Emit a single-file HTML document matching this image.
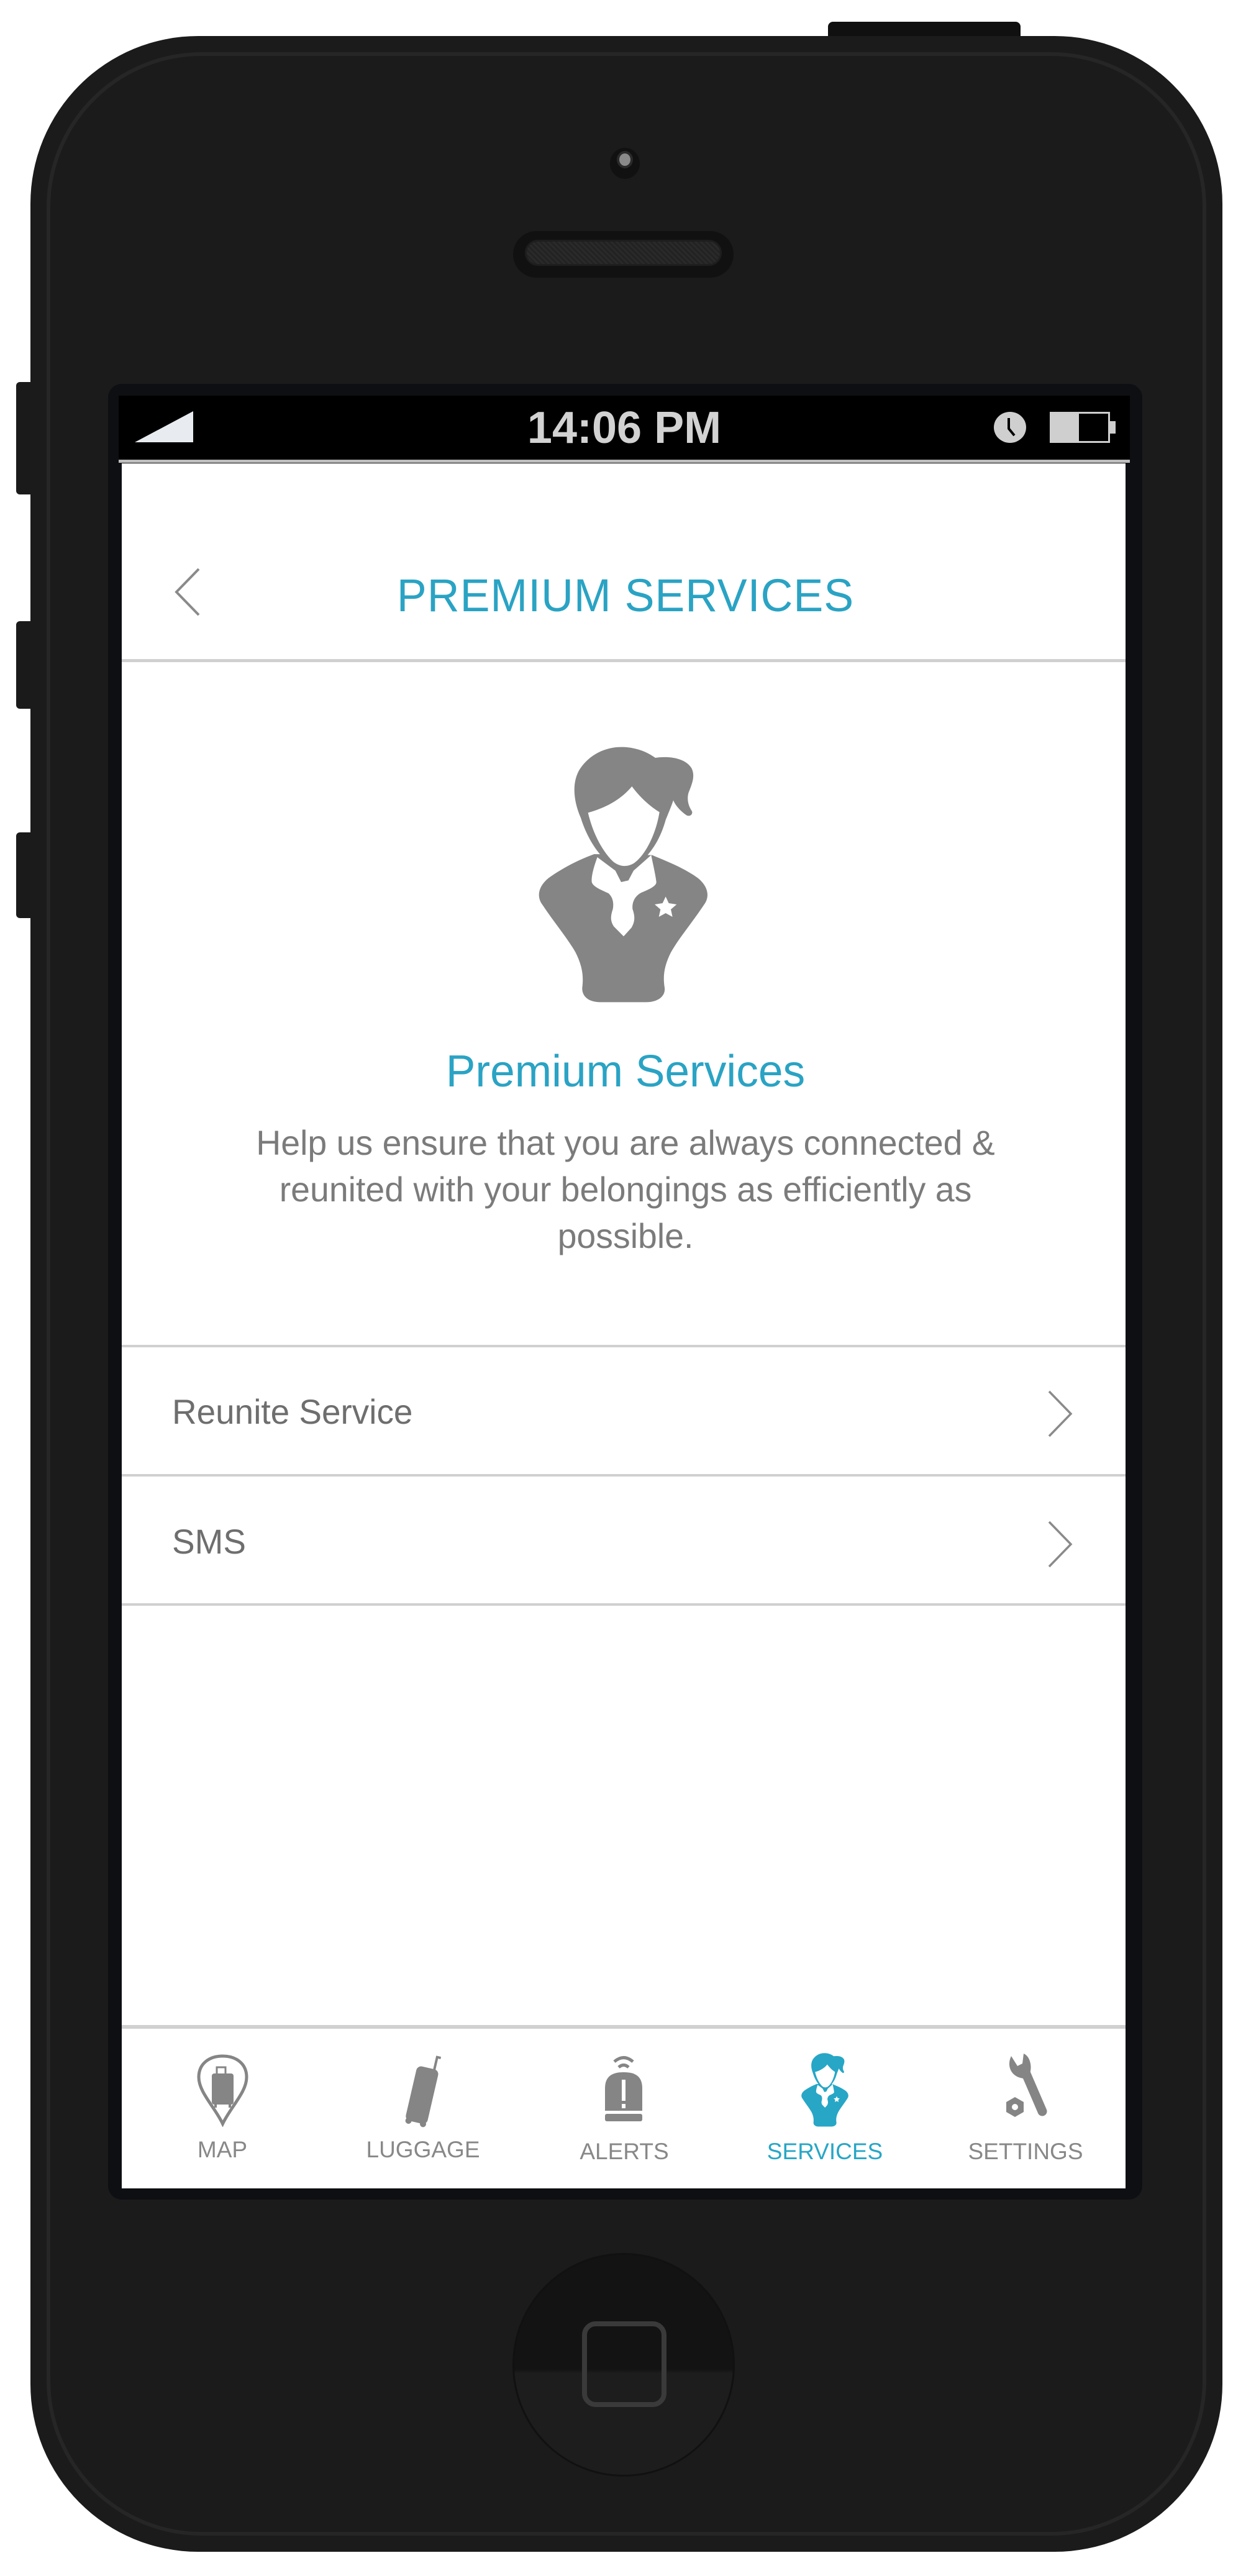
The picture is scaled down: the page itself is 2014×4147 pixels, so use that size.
<!DOCTYPE html>
<html><head><meta charset="utf-8">
<style>
*{margin:0;padding:0;box-sizing:border-box}
html,body{width:2014px;height:4147px;background:#fff;overflow:hidden;position:relative;font-family:"Liberation Sans",sans-serif}
.a{position:absolute}
.txt{white-space:nowrap;transform-origin:center}
</style></head><body>
<div class="a" style="left:26px;top:615px;width:30px;height:181px;background:#1a1a1a;border-radius:6px 0 0 6px"></div>
<div class="a" style="left:26px;top:1000px;width:30px;height:141px;background:#1a1a1a;border-radius:6px 0 0 6px"></div>
<div class="a" style="left:26px;top:1340px;width:30px;height:138px;background:#1a1a1a;border-radius:6px 0 0 6px"></div>
<div class="a" style="left:1333px;top:35px;width:310px;height:40px;background:#101010;border-radius:8px 8px 0 0"></div>
<div class="a" style="left:49px;top:58px;width:1919px;height:4050px;background:#1b1b1b;border-radius:270px"></div>
<div class="a" style="left:75px;top:84px;width:1867px;height:3998px;border:6px solid #262626;border-radius:250px"></div>
<div class="a" style="left:982px;top:238px;width:48px;height:50px;border-radius:50%;background:#111"></div>
<div class="a" style="left:993px;top:243px;width:26px;height:28px;border-radius:50%;background:#8a8a8a;border:4px solid #2a2a2a"></div>
<div class="a" style="left:826px;top:372px;width:355px;height:75px;border-radius:38px;background:#111"></div>
<div class="a" style="left:845px;top:386px;width:317px;height:42px;border-radius:21px;background:repeating-linear-gradient(45deg,#2a2a2a 0 3px,#222 3px 6px);border:3px solid #1e1e1e"></div>
<div class="a" style="left:174px;top:618px;width:1665px;height:2923px;background:#0e0f13;border-radius:22px"></div>
<div class="a" style="left:191px;top:637px;width:1628px;height:105px;background:#000"></div>
<div class="a" style="left:191px;top:740px;width:1628px;height:5px;background:#bdbdbd"></div>
<div class="a" style="left:196px;top:746px;width:1616px;height:2777px;background:#fff"></div>
<svg class="a" style="left:217px;top:662px" width="94" height="50" viewBox="0 0 94 50"><polygon points="0,50 94,0 94,50" fill="#e8ecf0"/></svg>
<div class="a txt" style="left:755px;top:648px;width:500px;text-align:center;font-size:72px;font-weight:bold;color:#d2d2d2;transform:scaleX(1.0)">14:06 PM</div>
<svg class="a" style="left:1600px;top:663px" width="52" height="50" viewBox="0 0 52 50"><ellipse cx="26" cy="25" rx="26" ry="25" fill="#cfcfcf"/><path d="M24,10 L24,27 L33,38" stroke="#000" stroke-width="4" fill="none"/></svg>
<svg class="a" style="left:1690px;top:663px" width="108" height="50" viewBox="0 0 108 50"><rect x="1.5" y="1.5" width="94" height="47" fill="#000" stroke="#cfcfcf" stroke-width="3"/><rect x="3" y="3" width="44" height="44" fill="#cfcfcf"/><rect x="96" y="15" width="10" height="20" fill="#cfcfcf"/></svg>
<svg class="a" style="left:280px;top:914px" width="44" height="78" viewBox="0 0 44 78"><path d="M40,2 L4,39 L40,76" stroke="#8a8a8a" stroke-width="4" fill="none"/></svg>
<div class="a txt" style="left:407px;top:916px;width:1200px;text-align:center;font-size:74px;color:#2aa3c4;transform:scaleX(0.97);letter-spacing:1px">PREMIUM SERVICES</div>
<div class="a" style="left:196px;top:1061px;width:1616px;height:5px;background:#d0d0d0"></div>
<svg class="a" style="left:800px;top:1180px" width="400" height="460" viewBox="0 0 1200 1380">
<path d="M470,585 C400,610 320,650 250,700 C200,740 190,790 220,830 C280,920 340,990 380,1060 C410,1120 420,1170 412,1230 C410,1270 440,1300 500,1300 L720,1300 C780,1300 815,1270 810,1230 C800,1170 810,1120 840,1060 C880,990 940,920 1000,830 C1030,790 1020,740 970,700 C900,650 820,620 750,590 Z" fill="#858585"/>
<path d="M485,600 C470,640 455,690 458,720 C465,745 510,760 540,775 C560,795 565,820 560,850 C550,880 545,905 565,935 L612,982 L650,940 C670,905 665,880 655,850 C652,815 668,785 700,770 C735,755 770,740 770,720 C765,680 755,640 745,590 L660,665 L635,712 L600,720 L572,665 Z" fill="#fff"/>
<path d="M405,410 C370,330 360,240 400,175 C450,100 530,65 610,68 C680,70 730,95 765,120 C830,110 910,120 940,170 C960,210 940,250 925,290 C915,330 930,360 942,378 C948,395 928,408 912,395 C885,375 862,350 852,325 C840,360 825,395 815,420 C790,510 750,570 700,620 L650,655 L575,655 L520,610 C470,560 430,490 405,410 Z" fill="#858585"/>
<path d="M440,385 C530,360 600,320 652,258 C690,310 740,355 785,382 C770,480 720,590 660,630 C625,650 590,645 560,620 C500,560 460,470 440,385 Z" fill="#fff"/>
<polygon points="815,790 830,822 868,828 840,852 848,888 815,870 782,888 790,852 762,828 800,822" fill="#fff"/>
</svg>
<div class="a txt" style="left:407px;top:1684px;width:1200px;text-align:center;font-size:72px;color:#2aa3c4;transform:scaleX(0.99)">Premium Services</div>
<div class="a" style="left:207px;top:1802px;width:1600px;text-align:center;font-size:56px;line-height:75px;color:#7b7b7b;transform:scaleX(0.99);transform-origin:center">Help us ensure that you are always connected &amp;<br>reunited with your belongings as efficiently as<br>possible.</div>
<div class="a" style="left:196px;top:2165px;width:1616px;height:4px;background:#d0d0d0"></div>
<div class="a" style="left:196px;top:2373px;width:1616px;height:4px;background:#d0d0d0"></div>
<div class="a" style="left:196px;top:2581px;width:1616px;height:4px;background:#d0d0d0"></div>
<div class="a txt" style="left:277px;top:2240px;font-size:56px;color:#6e6e6e;transform:scaleX(0.98);transform-origin:left">Reunite Service</div>
<div class="a txt" style="left:277px;top:2449px;font-size:56px;color:#6e6e6e;transform:scaleX(0.98);transform-origin:left">SMS</div>
<svg class="a" style="left:1686px;top:2238px" width="42" height="76" viewBox="0 0 42 76"><path d="M3,2 L38,38 L3,74" stroke="#8a8a8a" stroke-width="3.5" fill="none"/></svg>
<svg class="a" style="left:1686px;top:2448px" width="42" height="76" viewBox="0 0 42 76"><path d="M3,2 L38,38 L3,74" stroke="#8a8a8a" stroke-width="3.5" fill="none"/></svg>
<div class="a" style="left:196px;top:3260px;width:1616px;height:6px;background:#d0d0d0"></div>
<svg class="a" style="left:315px;top:3306px" width="87" height="118" viewBox="0 0 87 118"><path d="M43.5,113 C30,85 5,62 5,38 C5,16 22,4 43.5,4 C65,4 82,16 82,38 C82,62 57,85 43.5,113Z" stroke="#858585" stroke-width="5" fill="none"/><rect x="34" y="22" width="14" height="12" stroke="#858585" stroke-width="3" fill="none"/><rect x="26" y="32" width="35" height="50" rx="4" fill="#858585"/><rect x="30" y="82" width="4" height="5" fill="#858585"/><rect x="53" y="82" width="4" height="5" fill="#858585"/></svg>
<svg class="a" style="left:643px;top:3306px" width="76" height="120" viewBox="0 0 76 120"><g transform="rotate(13 38 60)"><rect x="20" y="22" width="36" height="90" rx="8" fill="#858585"/><path d="M48,24 L48,2 L54,2" stroke="#858585" stroke-width="4" fill="none"/><circle cx="26" cy="112" r="5" fill="#858585"/><circle cx="50" cy="112" r="5" fill="#858585"/></g></svg>
<svg class="a" style="left:971px;top:3304px" width="66" height="113" viewBox="0 0 66 113"><path d="M18,15 Q33,2 48,15" stroke="#858585" stroke-width="5" fill="none"/><path d="M25,24 Q33,17 41,24" stroke="#858585" stroke-width="5" fill="none"/><path d="M3,94 L3,58 C3,38 15,32 33,32 C51,32 63,38 63,58 L63,94 Z" fill="#858585"/><rect x="3" y="99" width="60" height="12" rx="3" fill="#858585"/><rect x="30" y="44" width="6" height="34" fill="#fff"/><rect x="30" y="83" width="6" height="7" fill="#fff"/></svg>
<svg class="a" style="left:1289px;top:3304px" width="78" height="120" viewBox="190 55 840 1250" preserveAspectRatio="none">
<path d="M470,585 C400,610 320,650 250,700 C200,740 190,790 220,830 C280,920 340,990 380,1060 C410,1120 420,1170 412,1230 C410,1270 440,1300 500,1300 L720,1300 C780,1300 815,1270 810,1230 C800,1170 810,1120 840,1060 C880,990 940,920 1000,830 C1030,790 1020,740 970,700 C900,650 820,620 750,590 Z" fill="#27a6c6"/>
<path d="M485,600 C470,640 455,690 458,720 C465,745 510,760 540,775 C560,795 565,820 560,850 C550,880 545,905 565,935 L612,982 L650,940 C670,905 665,880 655,850 C652,815 668,785 700,770 C735,755 770,740 770,720 C765,680 755,640 745,590 L660,665 L635,712 L600,720 L572,665 Z" fill="#fff"/>
<path d="M405,410 C370,330 360,240 400,175 C450,100 530,65 610,68 C680,70 730,95 765,120 C830,110 910,120 940,170 C960,210 940,250 925,290 C915,330 930,360 942,378 C948,395 928,408 912,395 C885,375 862,350 852,325 C840,360 825,395 815,420 C790,510 750,570 700,620 L650,655 L575,655 L520,610 C470,560 430,490 405,410 Z" fill="#27a6c6"/>
<path d="M440,385 C530,360 600,320 652,258 C690,310 740,355 785,382 C770,480 720,590 660,630 C625,650 590,645 560,620 C500,560 460,470 440,385 Z" fill="#fff"/>
<polygon points="815,790 830,822 868,828 840,852 848,888 815,870 782,888 790,852 762,828 800,822" fill="#fff"/>
</svg>
<svg class="a" style="left:1614px;top:3304px" width="78" height="114" viewBox="0 0 78 114"><path d="M36,30 L64,95" stroke="#858585" stroke-width="15" stroke-linecap="round"/><path d="M14,6 C6,22 14,40 34,42 L44,34 C48,22 44,6 34,2 L32,18 L24,22 Z" fill="#858585"/><polygon points="20,72 34,80 34,96 20,104 6,96 6,80" fill="#858585"/><circle cx="20" cy="88" r="5" fill="#fff"/></svg>
<div class="a txt" style="left:258px;top:3440px;width:200px;text-align:center;font-size:37px;color:#888">MAP</div>
<div class="a txt" style="left:581px;top:3440px;width:200px;text-align:center;font-size:37px;color:#888">LUGGAGE</div>
<div class="a txt" style="left:905px;top:3443px;width:200px;text-align:center;font-size:37px;color:#888">ALERTS</div>
<div class="a txt" style="left:1228px;top:3443px;width:200px;text-align:center;font-size:37px;color:#27a6c6">SERVICES</div>
<div class="a txt" style="left:1551px;top:3443px;width:200px;text-align:center;font-size:37px;color:#888">SETTINGS</div>
<div class="a" style="left:825px;top:3627px;width:358px;height:360px;border-radius:50%;background:linear-gradient(#131313 0%,#131313 52%,#1d1d1d 54%,#1d1d1d 100%);border:3px solid #111"></div>
<div class="a" style="left:937px;top:3737px;width:136px;height:138px;border:8px solid #3a3a3a;border-radius:22px"></div>
</body></html>
